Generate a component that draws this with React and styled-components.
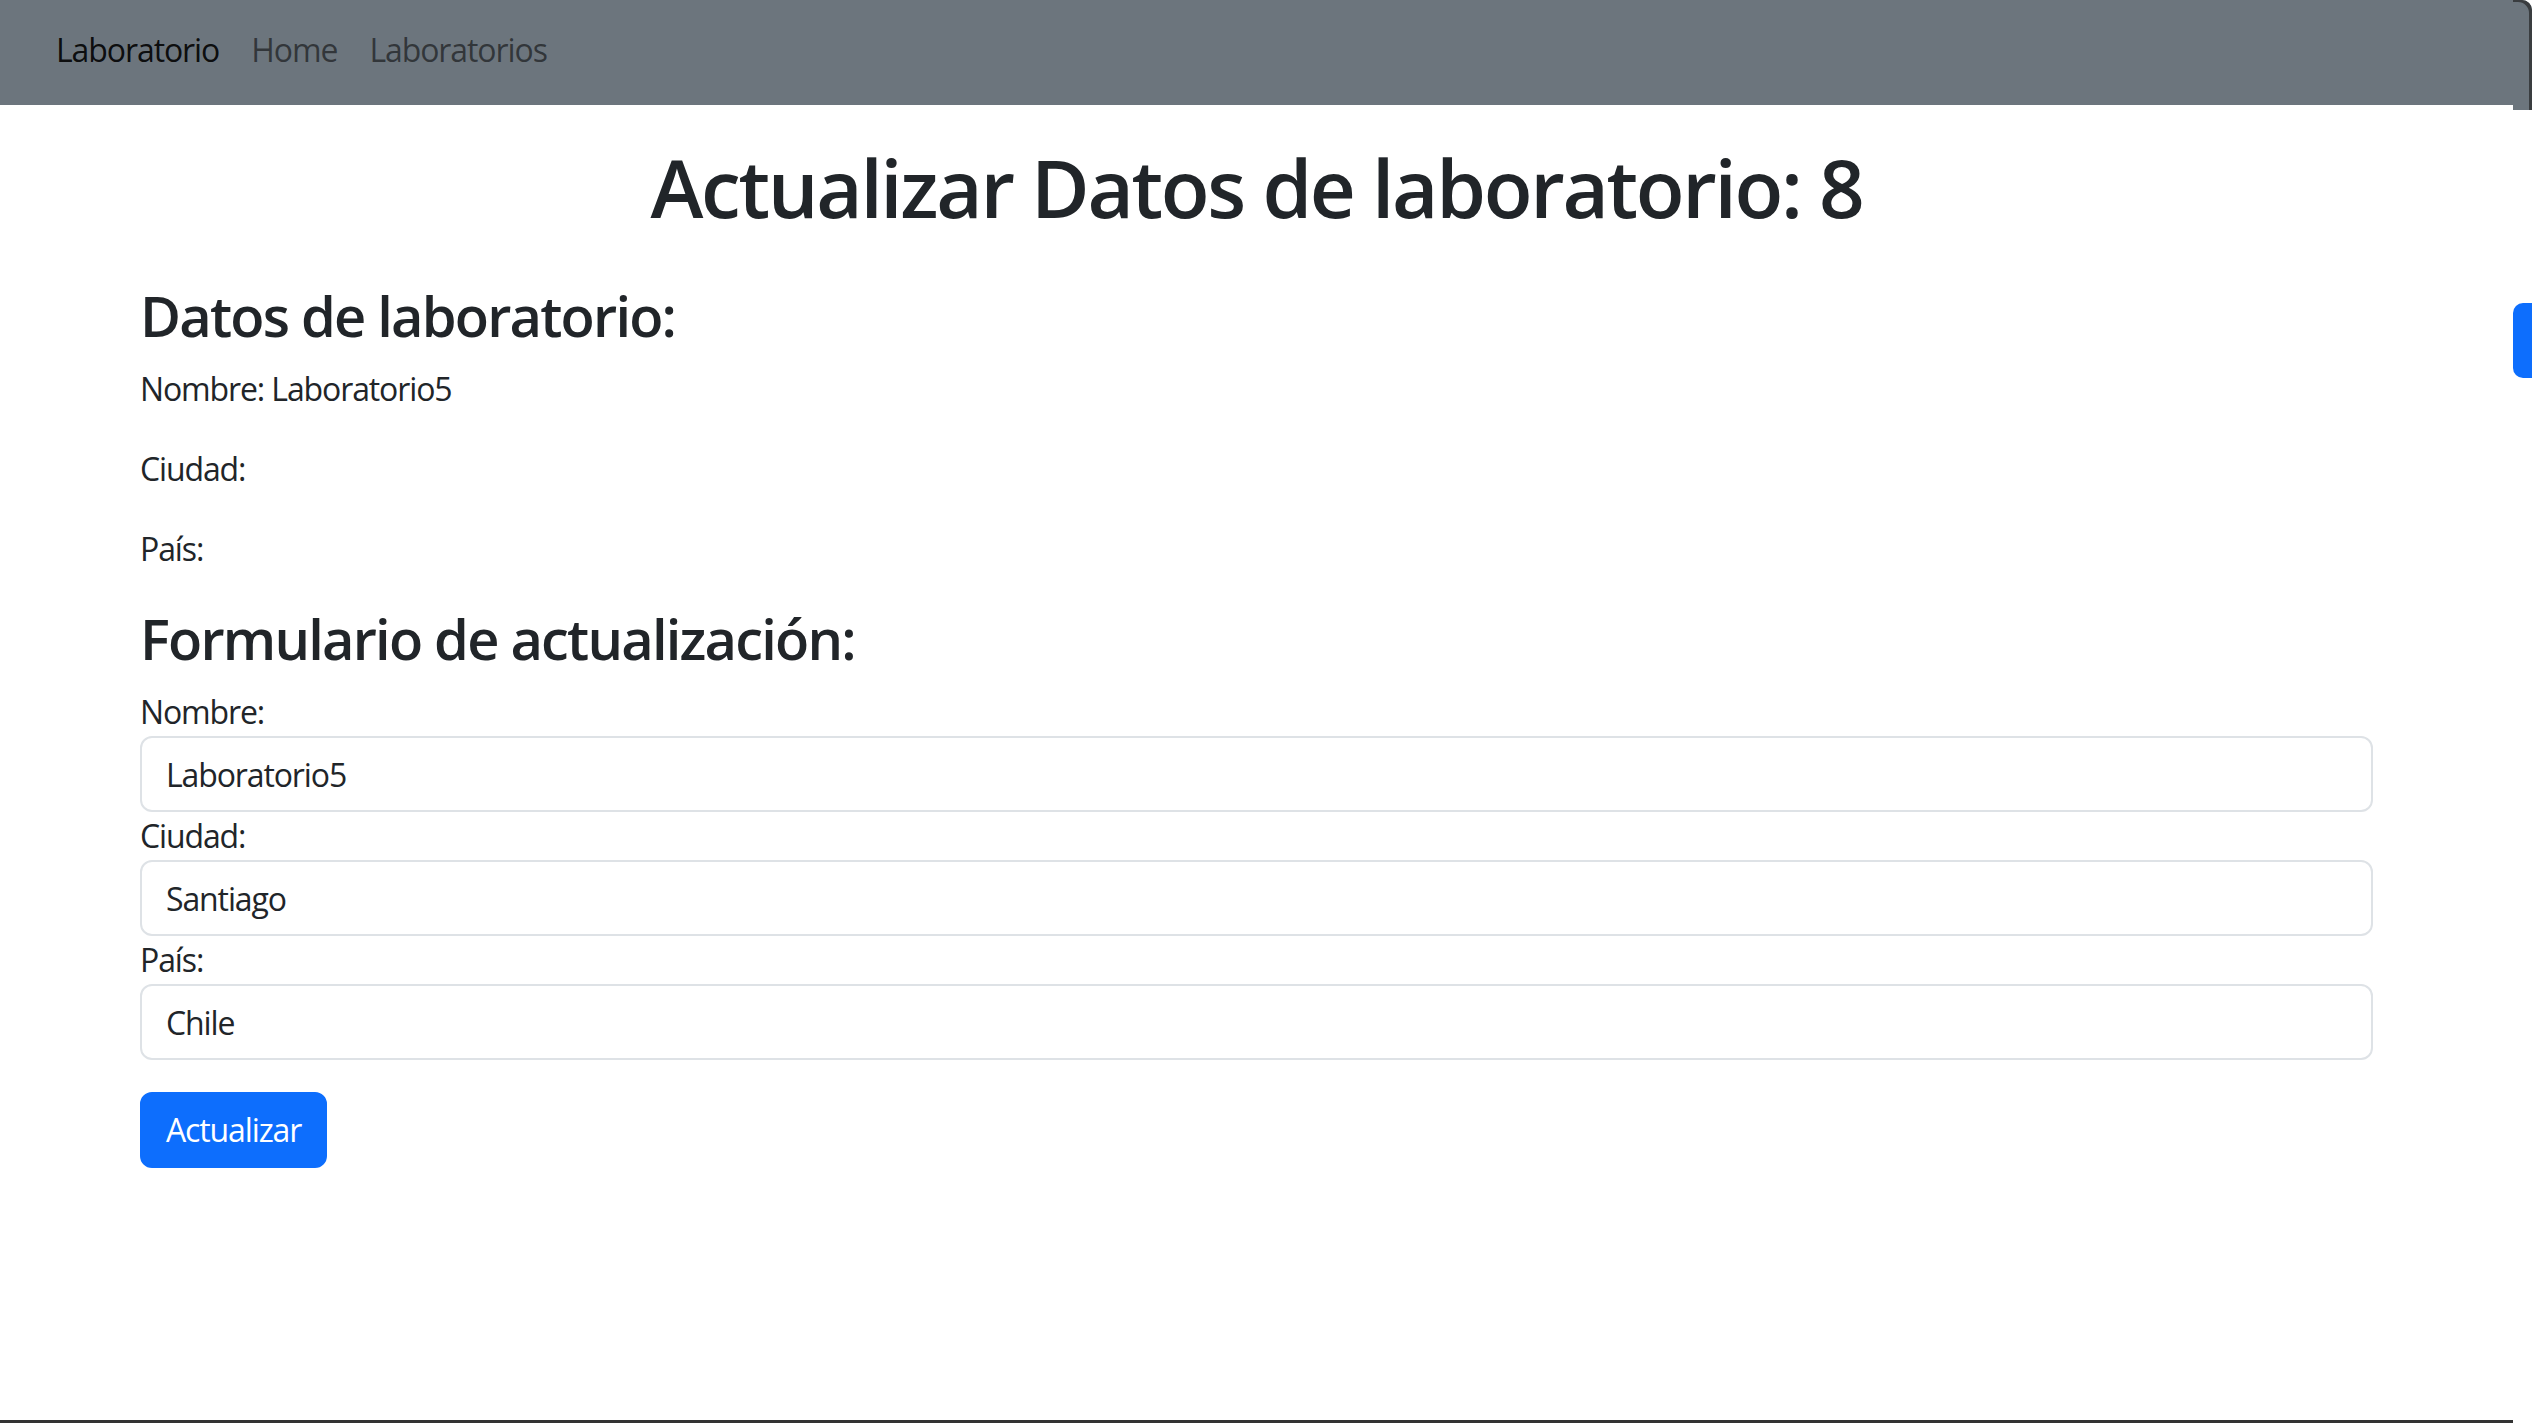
import React from 'react'
import styled, { createGlobalStyle } from 'styled-components'

const GlobalStyle = createGlobalStyle`
    html, body {
        margin: 0;
        padding: 0;
        background: #ffffff;
    }
    body {
        font-family: "Open Sans", "Noto Sans", "Liberation Sans", sans-serif;
        color: #212529;
        overflow: hidden;
    }
    * {
        box-sizing: border-box;
    }
`

const Screen = styled.div`
    display: grid;
    grid-template-columns: 1fr 19px;
    grid-template-rows: 1fr 3px;
    width: 100vw;
    height: 100vh;
    background: #ffffff;
`

const Page = styled.div`
    display: flex;
    flex-direction: column;
    min-width: 0;
`

const NavBar = styled.nav`
    display: flex;
    align-items: center;
    gap: 32px;
    height: 105px;
    padding: 0 0 5px 56px;
    background-color: #6c757d;
    font-size: 32px;
    line-height: 48px;
    letter-spacing: -0.034em;
`

const Brand = styled.a`
    color: rgba(0, 0, 0, 0.9);
    text-decoration: none;
`

const NavLink = styled.a`
    color: rgba(0, 0, 0, 0.55);
    text-decoration: none;
`

const Content = styled.main`
    width: 2233px;
    margin: 0 auto;
    padding-top: 34px;
`

const Title = styled.h1`
    margin: 0 0 47px;
    text-align: center;
    font-size: 80px;
    line-height: 96px;
    font-weight: 600;
    letter-spacing: -0.029em;
`

const SectionTitle = styled.h3`
    margin: 0 0 16px;
    font-size: 56px;
    line-height: 67px;
    font-weight: 600;
    letter-spacing: -0.032em;
`

const Info = styled.p`
    margin: 0 0 32px;
    font-size: 32px;
    line-height: 48px;
    letter-spacing: -0.035em;
`

const Form = styled.form`
    display: flex;
    flex-direction: column;
    align-items: flex-start;
`

const Label = styled.label`
    font-size: 32px;
    line-height: 48px;
    letter-spacing: -0.035em;
`

const Input = styled.input`
    display: block;
    width: 100%;
    height: 76px;
    padding: 12px 24px;
    border: 2px solid #dee2e6;
    border-radius: 12px;
    background: #ffffff;
    color: #212529;
    font-family: inherit;
    font-size: 32px;
    line-height: 48px;
    letter-spacing: -0.035em;
    outline: none;
`

const Button = styled.button`
    margin-top: 32px;
    height: 76px;
    padding: 12px 24px;
    border: 2px solid #0d6efd;
    border-radius: 12px;
    background: #0d6efd;
    color: #ffffff;
    font-family: inherit;
    font-size: 32px;
    line-height: 48px;
    letter-spacing: -0.035em;
    cursor: pointer;
`

const Rail = styled.aside`
    position: relative;
    background: #ffffff;
`

const RailTop = styled.div`
    height: 110px;
    background: #6c757d;
    border-top-right-radius: 10px;
    box-shadow: inset -4px 3px 0 -1px #3a3d40;
`

const SideTab = styled.div`
    position: absolute;
    top: 303px;
    left: 0;
    width: 19px;
    height: 75px;
    background: #0d6efd;
    border-radius: 10px 0 0 10px;
`

const BottomBar = styled.div`
    grid-column: 1 / 2;
    background: #333333;
`

export default function App() {
    return (
        <>
            <GlobalStyle />
            <Screen>
                <Page>
                    <NavBar>
                        <Brand href="#">Laboratorio</Brand>
                        <NavLink href="#">Home</NavLink>
                        <NavLink href="#">Laboratorios</NavLink>
                    </NavBar>
                    <Content>
                        <Title>Actualizar Datos de laboratorio: 8</Title>
                        <SectionTitle>Datos de laboratorio:</SectionTitle>
                        <Info>Nombre: Laboratorio5</Info>
                        <Info>Ciudad: </Info>
                        <Info>País: </Info>
                        <SectionTitle>Formulario de actualización:</SectionTitle>
                        <Form onSubmit={(e) => e.preventDefault()}>
                            <Label htmlFor="nombre">Nombre:</Label>
                            <Input id="nombre" defaultValue="Laboratorio5" />
                            <Label htmlFor="ciudad">Ciudad:</Label>
                            <Input id="ciudad" defaultValue="Santiago" />
                            <Label htmlFor="pais">País:</Label>
                            <Input id="pais" defaultValue="Chile" />
                            <Button type="submit">Actualizar</Button>
                        </Form>
                    </Content>
                </Page>
                <Rail>
                    <RailTop />
                    <SideTab />
                </Rail>
                <BottomBar />
            </Screen>
        </>
    )
}
